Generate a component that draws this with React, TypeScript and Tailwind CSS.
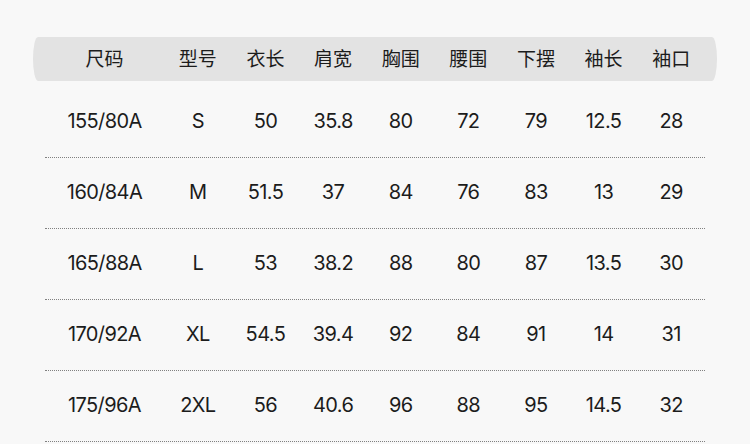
const headers = ['尺码', '型号', '衣长', '肩宽', '胸围', '腰围', '下摆', '袖长', '袖口']

const rows = [
  ['155/80A', 'S', '50', '35.8', '80', '72', '79', '12.5', '28'],
  ['160/84A', 'M', '51.5', '37', '84', '76', '83', '13', '29'],
  ['165/88A', 'L', '53', '38.2', '88', '80', '87', '13.5', '30'],
  ['170/92A', 'XL', '54.5', '39.4', '92', '84', '91', '14', '31'],
  ['175/96A', '2XL', '56', '40.6', '96', '88', '95', '14.5', '32'],
]

export default function App() {
  return (
    <div
      className="w-[750px] h-[444px] overflow-hidden bg-[#f8f8f8] text-[#1c1c1c] pt-[37px]"
      style={{ fontFamily: 'Inter, "Noto Sans CJK SC", sans-serif' }}
    >
      {/* Header band */}
      <div className="mx-[33px] h-[44px] bg-[#e3e3e3] rounded-[5px/22px] px-[12px] flex items-center">
        {headers.map((h, i) => (
          <div
            key={h}
            className={`${i === 0 ? 'w-[119px]' : 'flex-1'} text-center text-[19px] leading-none`}
          >
            {h}
          </div>
        ))}
      </div>

      {/* Rows */}
      <div className="mx-[45px] mt-[5px]">
        {rows.map((r, ri) => (
          <div
            key={ri}
            className={`flex items-center h-[71px] ${ri > 0 ? 'border-t border-dotted border-[#808080]' : ''}`}
          >
            {r.map((c, ci) => (
              <div
                key={ci}
                className={`${ci === 0 ? 'w-[119px]' : 'flex-1'} text-center text-[20px] leading-none tracking-[-0.6px] -mt-[2px]`}
              >
                {c}
              </div>
            ))}
          </div>
        ))}
        <div className="border-t border-dotted border-[#808080]" />
      </div>
    </div>
  )
}
